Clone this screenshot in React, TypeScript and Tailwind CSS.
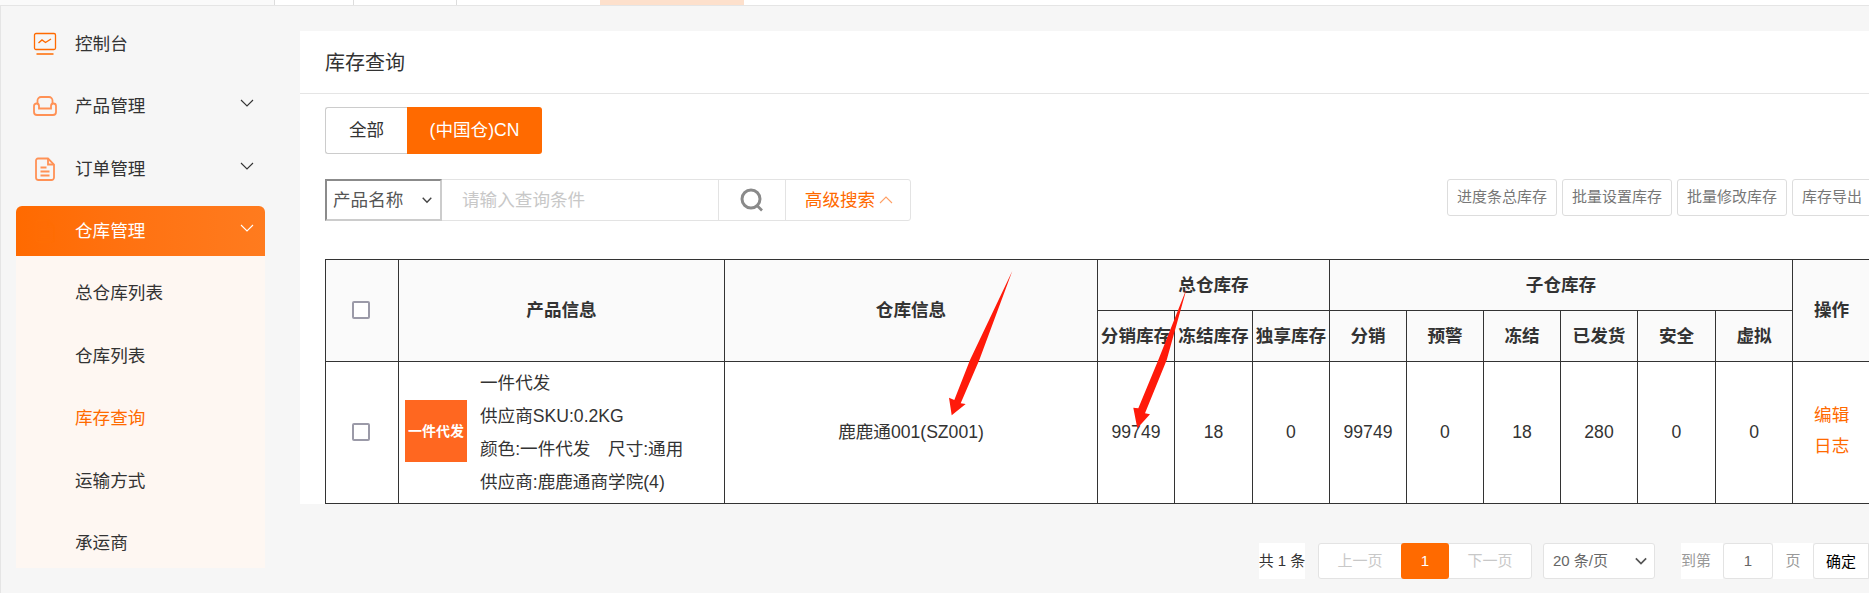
const Chevron = ({ up, className }: { up?: boolean; className: string }) => (
  <svg viewBox="0 0 14 8" fill="none" stroke="currentColor" strokeWidth="1.1" className={className}>
    <path d={up ? "M1 7L7 1l6 6" : "M1 1l6 6 6-6"} />
  </svg>
);

const ConsoleIcon = () => (
  <svg viewBox="0 0 24 24" fill="none" stroke="#ff6a00" className="w-6 h-6 shrink-0">
    <rect x="1.5" y="1.5" width="21" height="16" rx="1.5" strokeWidth="1.3" />
    <path d="M5.5 11l3.5-3 3.5 2.5L18 7" strokeWidth="1.4" />
    <path d="M3.5 22h17" strokeWidth="1.5" />
  </svg>
);

const SofaIcon = () => (
  <svg viewBox="0 0 24 24" fill="none" stroke="#ff9155" strokeWidth="1.8" className="w-6 h-6 shrink-0">
    <path d="M4.5 9V6.5a3.5 3.5 0 0 1 3.5-3.5h8a3.5 3.5 0 0 1 3.5 3.5V9" />
    <path d="M6 14.5V12a2.5 2.5 0 0 0-5 0v6a3 3 0 0 0 3 3h16a3 3 0 0 0 3-3v-6a2.5 2.5 0 0 0-5 0v2.5z" />
  </svg>
);

const DocIcon = ({ color }: { color: string }) => (
  <svg viewBox="0 0 24 24" fill="none" stroke={color} strokeWidth="1.8" className="w-6 h-6 shrink-0">
    <path d="M5 1.5h10l6 6v13a2.5 2.5 0 0 1-2.5 2.5h-13A2.5 2.5 0 0 1 3 20.500v-17a2 2 0 0 1 2-2z" />
    <path d="M15 2v5.500h5.500M7.500 10.500h6M7.500 14.500h9M7.500 18.500h9" />
  </svg>
);

const Box = () => <div className="w-[18px] h-[18px] mx-auto -translate-x-px -translate-y-px rounded-[2px] border-2 border-[#9b9aa8] bg-white" />;

const subMenus = ["总仓库列表", "仓库列表", "库存查询", "运输方式", "承运商"];
const toolButtons = ["进度条总库存", "批量设置库存", "批量修改库存", "库存导出"];
const widths = [73, 326, 373, 77, 78, 77, 77, 77, 77, 77, 78, 77, 78];
const thCls = "border border-[#333] bg-[#fafafa] font-bold text-center text-[#333] p-0";
const tdCls = "border border-[#333] text-center p-0";

export default function App() {
  return (
    <div className="relative w-[1869px] h-[593px] overflow-hidden flex flex-col bg-[#f6f6f6] text-[#333] font-['Liberation_Sans','Noto_Sans_CJK_SC',sans-serif]">
      {/* top tab strip */}
      <div className="flex h-[6px] shrink-0 bg-white border-b border-[#e5e5e5]">
        <div className="w-[275px] border-r border-[#ddd] bg-[#fafafa]" />
        <div className="w-[79px] border-r border-[#ddd]" />
        <div className="w-[103px] border-r border-[#ddd]" />
        <div className="w-[143px]" />
        <div className="w-[144px] bg-[#fde0cc]" />
      </div>

      <div className="flex flex-1 min-h-0">
        <aside className="w-[300px] shrink-0 border-l border-[#e5e5e5] pt-[7px] pl-[15px] pr-[35px] text-[17.6px]">
          <div className="h-[62px] flex items-center pl-[17px] gap-[18px]">
            <ConsoleIcon />
            <span>控制台</span>
          </div>
          <div className="h-[62.5px] flex items-center pl-[17px] gap-[18px]">
            <SofaIcon />
            <span className="flex-1">产品管理</span>
            <Chevron className="w-[14px] h-2 mr-[11px] mb-[6px]" />
          </div>
          <div className="h-[62.5px] flex items-center pl-[17px] gap-[18px]">
            <DocIcon color="#ff9155" />
            <span className="flex-1">订单管理</span>
            <Chevron className="w-[14px] h-2 mr-[11px] mb-[6px]" />
          </div>
          <div className="mt-[6px] h-[50px] flex items-center pl-[17px] gap-[18px] rounded-t-md bg-gradient-to-r from-[#ff6a00] to-[#ff7b1e] text-white">
            <DocIcon color="#ff6d04" />
            <span className="flex-1">仓库管理</span>
            <Chevron className="w-[14px] h-2 mr-[11px] mb-[6px]" />
          </div>
          <div className="h-[312px] pt-[6px] bg-[#fef7f2] overflow-hidden">
            {subMenus.map((name) => (
              <div key={name} className={`h-[62.5px] flex items-center pl-[59px] ${name === "库存查询" ? "text-[#ff6a00]" : ""}`}>
                {name}
              </div>
            ))}
          </div>
        </aside>

        <main className="flex-1 min-w-0 pt-[25px] flex flex-col bg-[#f6f6f6]">
          <section className="bg-white pl-[25px] overflow-hidden">
            <div className="-ml-[25px] pl-[25px] h-[63px] flex items-center border-b border-[#e5e5e5] text-[20px] pt-[2px]">
              库存查询
            </div>

            <div className="mt-[13px] flex h-[47px] text-[17.6px]">
              <div className="w-[82px] flex items-center justify-center border border-[#ccc] border-r-0 rounded-l-[3px]">全部</div>
              <div className="w-[135px] flex items-center justify-center bg-[#ff6a00] text-white rounded-r-[3px]">(中国仓)CN</div>
            </div>

            <div className="mt-[25px] flex justify-between items-start">
              <div className="flex h-[42px] w-[586px] border border-[#e3e3e3] rounded-[3px] text-[17.6px]">
                <div className="w-[117px] -ml-px -my-px flex items-center justify-between pl-[6px] pr-[8px] border-2 border-t-[#8b8b8b] border-l-[#8b8b8b] border-r-[#ccc] border-b-[#ccc] text-[#555]">
                  产品名称
                  <Chevron className="w-[10px] h-2 text-[#444] [&_path]:stroke-2" />
                </div>
                <input placeholder="请输入查询条件" className="w-[276px] pl-[20px] outline-none bg-transparent placeholder:text-[#c8c8c8]" />
                <div className="w-[67px] flex items-center justify-center border-l border-[#e3e3e3]">
                  <svg viewBox="0 0 24 24" fill="none" className="w-6 h-6">
                    <circle cx="11" cy="11" r="9" stroke="#8a8a8a" strokeWidth="3" />
                    <path d="M17.500 18l4.500 4.500" stroke="#8a8a8a" strokeWidth="2.6" />
                  </svg>
                </div>
                <div className="flex-1 flex items-center justify-center gap-[4px] pl-[2px] border-l border-[#e3e3e3] text-[#ff6a00]">
                  高级搜索
                  <Chevron up className="w-[14px] h-2 text-[#ffa066]" />
                </div>
              </div>
              <div className="flex gap-[5px] -mr-[3px]">
                {toolButtons.map((b) => (
                  <div key={b} className="h-[37px] flex items-center px-[9px] border border-[#ddd] rounded-[3px] text-[15px] text-[#777] whitespace-nowrap">
                    {b}
                  </div>
                ))}
              </div>
            </div>

            <table className="mt-[38px] border-collapse table-fixed w-[1545px] text-[17.6px]">
              <colgroup>
                {widths.map((w, i) => (
                  <col key={i} style={{ width: w }} />
                ))}
              </colgroup>
              <thead>
                <tr className="h-[51px]">
                  <th rowSpan={2} className={thCls}><Box /></th>
                  <th rowSpan={2} className={thCls}>产品信息</th>
                  <th rowSpan={2} className={thCls}>仓库信息</th>
                  <th colSpan={3} className={thCls}>总仓库存</th>
                  <th colSpan={6} className={thCls}>子仓库存</th>
                  <th rowSpan={2} className={thCls}>操作</th>
                </tr>
                <tr className="h-[51px]">
                  {["分销库存", "冻结库存", "独享库存", "分销", "预警", "冻结", "已发货", "安全", "虚拟"].map((t) => (
                    <th key={t} className={`${thCls} whitespace-nowrap`}>{t}</th>
                  ))}
                </tr>
              </thead>
              <tbody>
                <tr className="h-[142px]">
                  <td className={tdCls}><Box /></td>
                  <td className={`${tdCls} text-left`}>
                    <div className="flex items-center pl-[6px] gap-[13px]">
                      <div className="w-[62px] h-[62px] -mt-[3px] shrink-0 flex items-center justify-center bg-[#ff6720] text-white font-bold text-[14px] whitespace-nowrap">
                        一件代发
                      </div>
                      <div className="leading-[33px] whitespace-nowrap">
                        <div>一件代发</div>
                        <div>供应商SKU:0.2KG</div>
                        <div>颜色:一件代发　尺寸:通用</div>
                        <div>供应商:鹿鹿通商学院(4)</div>
                      </div>
                    </div>
                  </td>
                  <td className={tdCls}>鹿鹿通001(SZ001)</td>
                  <td className={tdCls}>99749</td>
                  <td className={tdCls}>18</td>
                  <td className={tdCls}>0</td>
                  <td className={tdCls}>99749</td>
                  <td className={tdCls}>0</td>
                  <td className={tdCls}>18</td>
                  <td className={tdCls}>280</td>
                  <td className={tdCls}>0</td>
                  <td className={tdCls}>0</td>
                  <td className={`${tdCls} text-[#ff6a00] leading-[31px] text-left pl-[21px] pb-[3px]`}>
                    <div>编辑</div>
                    <div>日志</div>
                  </td>
                </tr>
              </tbody>
            </table>
          </section>

          {/* pagination */}
          <div className="mt-[39px] flex h-[36px] text-[15px] pl-[959px] whitespace-nowrap">
            <div className="w-[46px] flex items-center justify-center bg-white">共 1 条</div>
            <div className="ml-[13px] flex w-[214px] border border-[#e3e3e3] rounded-[3px] bg-white text-[#c8c8c8]">
              <div className="flex-1 flex items-center justify-center">上一页</div>
              <div className="w-[48px] -my-px flex items-center justify-center bg-[#ff6a00] text-white rounded-[3px]">1</div>
              <div className="flex-1 flex items-center justify-center">下一页</div>
            </div>
            <div className="ml-[11px] w-[112px] flex items-center justify-between pl-[9px] pr-[7px] border border-[#e3e3e3] rounded-[3px] bg-white text-[#666]">
              20 条/页
              <Chevron className="w-[12px] h-2 text-[#555] [&_path]:stroke-2" />
            </div>
            <div className="ml-[26px] w-[42px] flex items-center bg-white text-[#999]">到第</div>
            <div className="w-[50px] flex items-center justify-center border border-[#e3e3e3] rounded-[3px] bg-white text-[#666]">1</div>
            <div className="w-[40px] flex items-center justify-center bg-white text-[#999]">页</div>
            <div className="w-[56px] flex items-center justify-center border border-[#e3e3e3] rounded-l-[3px] bg-white text-black pt-[2px]">确定</div>
          </div>
        </main>
      </div>

      {/* red annotation arrows drawn over the screenshot */}
      <svg viewBox="0 0 1869 593" className="absolute inset-0 w-[1869px] h-[593px] pointer-events-none">
        <polygon points="1012.300,271 979.300,360 960.700,403.300 965.700,404 951.700,415.300 949,397.700 954.300,400 970,360" fill="#ff1a0a" />
        <polygon points="1186.700,288.300 1166.700,360 1145,413.300 1150,414.300 1137.300,428.300 1133.300,407.700 1138.300,408.300 1158.300,360" fill="#ff1a0a" />
      </svg>
    </div>
  );
}
